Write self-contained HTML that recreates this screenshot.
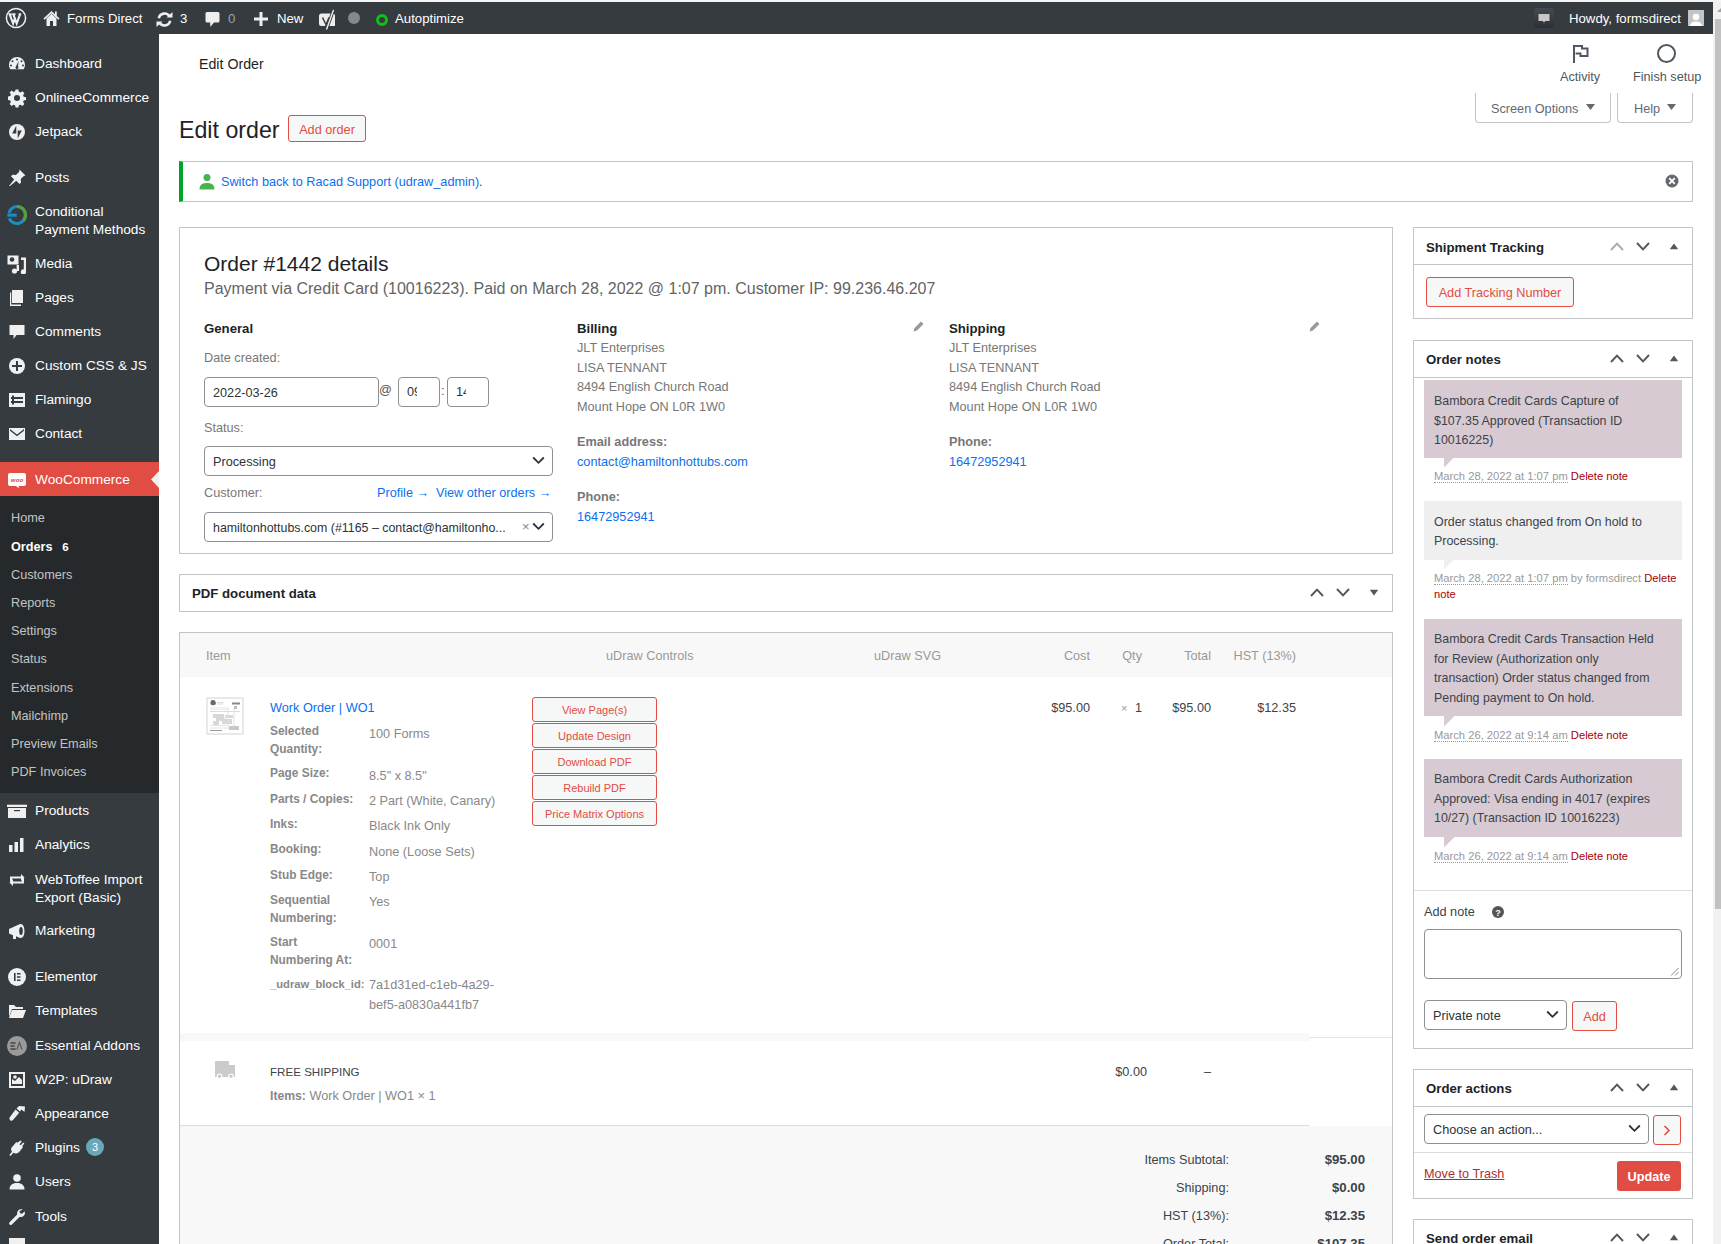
<!DOCTYPE html>
<html><head><meta charset="utf-8">
<style>
*{box-sizing:border-box}
html,body{margin:0;padding:0}
body{width:1721px;height:1244px;overflow:hidden;position:relative;background:#fff;font-family:"Liberation Sans",sans-serif;font-size:12.7px;color:#3c434a}
.a{position:absolute;white-space:nowrap}
svg{display:block}
div.a{padding-top:1px}
#topstrip{left:0;top:0;width:1721px;height:2px;background:#f4f4f4}
#adminbar{left:0;top:2px;width:1713px;height:32px;background:#363b3f;color:#fff;font-size:13.2px}
#adminbar .t{top:0;line-height:32px}
#sb{left:1713px;top:2px;width:8px;height:1242px;background:#f1f1f1}
#sbthumb{left:1715px;top:19px;width:6px;height:890px;background:#c1c1c1}
#menu{left:0;top:34px;width:159px;height:1210px;background:#363b3f}
.mi{left:35px;color:#fff;font-size:13.7px;line-height:18px}
.ic{left:7px;width:20px;height:20px}
.sub{left:11px;color:#c3c4c5;font-size:12.7px;line-height:18px}
</style></head>
<body>
<div id="topstrip" class="a"></div>
<div id="adminbar" class="a">
  <!-- WP logo -->
  <svg class="a" style="left:5px;top:5px" width="22" height="22" viewBox="0 0 22 22"><circle cx="11" cy="11" r="9.6" fill="none" stroke="#eee" stroke-width="1.5"/><path d="M4.6 7.2l3.5 9.3 2.2-6.2M8.2 7.2l3.5 9.3 3.4-9.3M3.6 7.2h3.2M7.3 7.2h3.2M13.6 7.2h2.6" fill="none" stroke="#eee" stroke-width="2.1"/></svg>
  <!-- home -->
  <svg class="a" style="left:43px;top:8px" width="17" height="17" viewBox="0 0 17 17"><path d="M3.5 8.5V16h10V8.5L8.5 3.8z" fill="#eee"/><rect x="7" y="11" width="3" height="5" fill="#363b3f"/><path d="M1 9.2L8.5 2.2 16 9.2" fill="none" stroke="#eee" stroke-width="1.7"/><rect x="12" y="1.5" width="1.8" height="5" fill="#eee"/></svg>
  <div class="a t" style="left:67px">Forms Direct</div>
  <!-- updates -->
  <svg class="a" style="left:155px;top:9px" width="19" height="17" viewBox="0 0 19 17"><path d="M3.8 7.2A5.8 5.8 0 0 1 14.6 5.6" fill="none" stroke="#eee" stroke-width="2.6"/><path d="M11.5 6.5h6V1z" fill="#eee"/><path d="M15.2 9.8A5.8 5.8 0 0 1 4.4 11.4" fill="none" stroke="#eee" stroke-width="2.6"/><path d="M7.5 10.5h-6V16z" fill="#eee"/></svg>
  <div class="a t" style="left:180px">3</div>
  <!-- comments -->
  <svg class="a" style="left:205px;top:9px" width="15" height="17" viewBox="0 0 15 17"><path d="M2 1h11a1.5 1.5 0 0 1 1.5 1.5v7.5A1.5 1.5 0 0 1 13 11.5H9L5.2 16V11.5H2A1.5 1.5 0 0 1 .5 10v-7.5A1.5 1.5 0 0 1 2 1z" fill="#eee"/></svg>
  <div class="a t" style="left:228px;color:#a0a5aa">0</div>
  <!-- new -->
  <svg class="a" style="left:254px;top:10px" width="14" height="14" viewBox="0 0 14 14"><path d="M5.5 0h3v5.5H14v3H8.5V14h-3V8.5H0v-3h5.5z" fill="#eee"/></svg>
  <div class="a t" style="left:277px">New</div>
  <!-- yoast -->
  <svg class="a" style="left:318px;top:7px" width="19" height="22" viewBox="0 0 19 22"><path d="M3.5 4.5h9.5l-4.2 12.5H3.5A2.5 2.5 0 0 1 1 14.5V7A2.5 2.5 0 0 1 3.5 4.5zM13.8 5.2l.7-.7a2.5 2.5 0 0 1 2.5 2.5v10H10z" fill="#eee"/><path d="M4.5 8.5l3.2 6.5M11 8.5L7.5 17" stroke="#363b3f" stroke-width="1.5" fill="none"/><path d="M15.5 1L8.5 20.5" stroke="#363b3f" stroke-width="3.2"/><path d="M15.5 1L8.5 20.5" stroke="#eee" stroke-width="1.4"/></svg>
  <div class="a" style="left:348px;top:10px;width:12px;height:12px;border-radius:50%;background:#888"></div>
  <div class="a" style="left:376px;top:12px;width:12px;height:12px;border-radius:50%;border:3px solid #0fbf1b"></div>
  <div class="a t" style="left:395px">Autoptimize</div>
  <!-- right -->
  <div class="a" style="left:1534px;top:6px;width:20px;height:20px;border-radius:3px;background:linear-gradient(#444a4f,#2c3034)"></div>
  <svg class="a" style="left:1538px;top:11px" width="12" height="12" viewBox="0 0 12 12"><path d="M0.5 1h11v7H7L6 10 5 8H0.5z" fill="#c8c8c8"/></svg>
  <div class="a t" style="left:1569px">Howdy, formsdirect</div>
  <div class="a" style="left:1688px;top:8px;width:16px;height:16px;background:#c4c4c4;overflow:hidden"><svg width="16" height="16" viewBox="0 0 16 16"><circle cx="8" cy="6" r="3.3" fill="#fff"/><path d="M1.5 16c.5-4 3-5.5 6.5-5.5s6 1.5 6.5 5.5z" fill="#fff"/></svg></div>
</div>
<div id="sb" class="a"></div>
<svg class="a" style="left:1713px;top:5px" width="8" height="10" viewBox="0 0 8 10"><path d="M8 3L4 7h4z" fill="#a3a3a3"/></svg>
<div id="sbthumb" class="a"></div>

<!-- MENU -->
<div id="menu" class="a"></div>
<!-- MENU_ITEMS -->
<div class="a" style="left:7px;top:53.0px"><svg width="20" height="20" viewBox="0 0 20 20"><path d="M10 3a8 8 0 0 0-8 8c0 1.6.5 3.1 1.3 4.3h13.4A8 8 0 0 0 18 11a8 8 0 0 0-8-8zm0 1.6a1 1 0 1 1 0 2 1 1 0 0 1 0-2zM5.5 6.3a1 1 0 1 1 0 2 1 1 0 0 1 0-2zm9 0a1 1 0 1 1 0 2 1 1 0 0 1 0-2zM4 10.5a1 1 0 1 1 0 2 1 1 0 0 1 0-2zm12 0a1 1 0 1 1 0 2 1 1 0 0 1 0-2zM11.6 7l-.6 5.3a1.5 1.5 0 1 1-2 0z" fill="#f0f0f1" fill-rule="evenodd"/></svg></div>
<div class="a mi" style="top:54px">Dashboard</div>
<div class="a" style="left:7px;top:87.0px"><svg width="20" height="20" viewBox="0 0 20 20"><path d="M8.6 1.5h2.8l.5 2.3 1.5.7 2-1.3 2 2-1.3 2 .6 1.5 2.3.5v2.8l-2.3.5-.6 1.5 1.3 2-2 2-2-1.3-1.5.6-.5 2.3H8.6l-.5-2.3-1.5-.6-2 1.3-2-2 1.3-2-.6-1.5-2.3-.5V8.6l2.3-.5.6-1.5-1.3-2 2-2 2 1.3 1.5-.7zM10 7a3 3 0 1 0 0 6 3 3 0 0 0 0-6z" fill="#f0f0f1" fill-rule="evenodd"/></svg></div>
<div class="a mi" style="top:88px">OnlineeCommerce</div>
<div class="a" style="left:7px;top:121.0px"><svg width="20" height="20" viewBox="0 0 20 20"><circle cx="10" cy="10" r="8" fill="#f0f0f1"/><path d="M9.3 3.5v8H5.2zM10.7 16.5v-8h4.1z" fill="#363b3f"/></svg></div>
<div class="a mi" style="top:122px">Jetpack</div>
<div class="a" style="left:7px;top:167.0px"><svg width="20" height="20" viewBox="0 0 20 20"><path d="M12.5 1.5l6 6-1.6.4-3.2 3.2.3 3.4-1.5 1.5-3.2-3.2L3 18l-1-.1 5.2-6.4L4 8.3l1.5-1.5 3.4.3 3.2-3.2z" fill="#f0f0f1"/></svg></div>
<div class="a mi" style="top:168px">Posts</div>
<div class="a" style="left:6px;top:203.0px"><svg width="22" height="22" viewBox="0 0 22 22"><path d="M11 2.5a8.5 8.5 0 1 1-7.8 11.8" fill="none" stroke="#1e8cbe" stroke-width="3.2"/><path d="M11 2.5a8.5 8.5 0 0 1 6.5 13.9" fill="none" stroke="#5a9e3a" stroke-width="3.2"/><path d="M3 11a8 8 0 0 1 8-8.5" fill="none" stroke="#1e8cbe" stroke-width="3.2"/><rect x="1" y="9.2" width="10" height="3.8" fill="#1e8cbe" stroke="#363b3f" stroke-width=".6"/></svg></div>
<div class="a mi" style="top:202px">Conditional<br>Payment Methods</div>
<div class="a" style="left:7px;top:253.0px"><svg width="20" height="20" viewBox="0 0 20 20"><path d="M0.5 1.5h11v9h-11z" fill="#f0f0f1"/><circle cx="5" cy="5.5" r="2.3" fill="#363b3f"/><path d="M14 3.5h5v14.5a2.6 2.6 0 1 1-2.2-2.6V6H14z" fill="#f0f0f1"/><circle cx="7.5" cy="17" r="2.6" fill="#f0f0f1"/><path d="M9.6 11h2.4v6H9.6z" fill="#f0f0f1"/></svg></div>
<div class="a mi" style="top:254px">Media</div>
<div class="a" style="left:7px;top:287.0px"><svg width="20" height="20" viewBox="0 0 20 20"><path d="M5 2h11v13H5z" fill="#f0f0f1"/><path d="M3 4.5h1.2V16.5H14V18H3z" fill="#f0f0f1"/></svg></div>
<div class="a mi" style="top:288px">Pages</div>
<div class="a" style="left:7px;top:321.0px"><svg width="20" height="20" viewBox="0 0 20 20"><path d="M2.5 3h15v10H9.5L6.5 17v-4h-4z" fill="#f0f0f1"/></svg></div>
<div class="a mi" style="top:322px">Comments</div>
<div class="a" style="left:7px;top:355.0px"><svg width="20" height="20" viewBox="0 0 20 20"><circle cx="10" cy="10" r="8" fill="#f0f0f1"/><path d="M9 5h2v4h4v2h-4v4H9v-4H5V9h4z" fill="#363b3f"/></svg></div>
<div class="a mi" style="top:356px">Custom CSS &amp; JS</div>
<div class="a" style="left:7px;top:389.0px"><svg width="20" height="20" viewBox="0 0 20 20"><path d="M2 3h16v14H2z" fill="#f0f0f1"/><path d="M4 7h12v2H4zM4 11h12v2H4z" fill="#363b3f"/><path d="M5 5.5h2v9H5z" fill="#363b3f"/></svg></div>
<div class="a mi" style="top:390px">Flamingo</div>
<div class="a" style="left:7px;top:423.0px"><svg width="20" height="20" viewBox="0 0 20 20"><path d="M2 4h16v12H2z" fill="#f0f0f1"/><path d="M3 5l7 5.5L17 5v1.8l-7 5.4-7-5.4z" fill="#363b3f"/></svg></div>
<div class="a mi" style="top:424px">Contact</div>
<div class="a" style="left:7px;top:800.0px"><svg width="20" height="20" viewBox="0 0 20 20"><path d="M0 3.7h20v2.3H0z" fill="#f0f0f1"/><path d="M1 7h18v10H1z" fill="#f0f0f1"/><path d="M7 9h6v1.2H7z" fill="#363b3f"/></svg></div>
<div class="a mi" style="top:801px">Products</div>
<div class="a" style="left:7px;top:834.0px"><svg width="20" height="20" viewBox="0 0 20 20"><path d="M2 10h3.5v7H2zM7.5 7h3.5v10H7.5zM13 3h3.5v14H13z" fill="#f0f0f1"/></svg></div>
<div class="a mi" style="top:835px">Analytics</div>
<div class="a" style="left:7px;top:869.0px"><svg width="20" height="20" viewBox="0 0 20 20"><path d="M3 6.5h11V4l3.5 3.5L14 11V8.5H5v3H3zM17 13.5H6V16l-3.5-3.5L6 9v2.5h9v-3h2z" fill="#f0f0f1"/></svg></div>
<div class="a mi" style="top:870px">WebToffee Import<br>Export (Basic)</div>
<div class="a" style="left:7px;top:920.0px"><svg width="20" height="20" viewBox="0 0 20 20"><path d="M2 8l11-5v14l-4-1.8V18H6v-3.8l-4-1.7z" fill="#f0f0f1"/><ellipse cx="14" cy="10" rx="3.5" ry="7" fill="#f0f0f1"/><ellipse cx="14" cy="10" rx="1.8" ry="4" fill="#363b3f"/></svg></div>
<div class="a mi" style="top:921px">Marketing</div>
<div class="a" style="left:7px;top:966.0px"><svg width="20" height="20" viewBox="0 0 20 20"><circle cx="10" cy="10" r="9" fill="#f0f0f1"/><path d="M7 6h1.6v8H7zM10 6h3.5v1.6H10zM10 9.2h3.5v1.6H10zM10 12.4h3.5V14H10z" fill="#363b3f"/></svg></div>
<div class="a mi" style="top:967px">Elementor</div>
<div class="a" style="left:7px;top:1000.0px"><svg width="20" height="20" viewBox="0 0 20 20"><path d="M2 4h5l2 2h7v2H5l-3 8z" fill="#f0f0f1"/><path d="M5 9h14l-3 8H2z" fill="#f0f0f1"/></svg></div>
<div class="a mi" style="top:1001px">Templates</div>
<div class="a" style="left:6px;top:1033.5px"><svg width="22" height="22" viewBox="0 0 22 22"><circle cx="11" cy="11" r="10" fill="#9a9a9a"/><path d="M5 7.5h4v1H5zM5 10.5h3v1H5zM5 13.5h4v1H5zM11 14.5l2.5-7 2.5 7" stroke="#5a5a5a" stroke-width="1.2" fill="none"/></svg></div>
<div class="a mi" style="top:1035.5px">Essential Addons</div>
<div class="a" style="left:7px;top:1069.0px"><svg width="20" height="20" viewBox="0 0 20 20"><path d="M2 2h16v16H2z" fill="#f0f0f1"/><path d="M4 4h12v12H4z" fill="#363b3f"/><path d="M5 14V9l3 2 4-4 3 3v4z" fill="#f0f0f1"/><circle cx="8" cy="7" r="1.8" fill="#f0f0f1"/></svg></div>
<div class="a mi" style="top:1070px">W2P: uDraw</div>
<div class="a" style="left:7px;top:1103.0px"><svg width="20" height="20" viewBox="0 0 20 20"><path d="M12 2l6 .5-.5 5.5-3-2.5-1.5 2-3.5-3zM8.5 5.5l3.7 3.2L6 16a2 2 0 0 1-3-.1 2 2 0 0 1 0-2.9z" fill="#f0f0f1"/></svg></div>
<div class="a mi" style="top:1104px">Appearance</div>
<div class="a" style="left:7px;top:1137.0px"><svg width="20" height="20" viewBox="0 0 20 20"><path d="M13.5 2.5l1.3 1-2.3 2.8 1.3 1 2.3-2.8 1.3 1-2.3 2.8 1 .8-3.7 4.6C10.6 15.7 8 16 6.3 14.7L3.6 18l-1.3-1 2.7-3.3c-1.3-1.7-1.2-4.3.6-5.3L9.3 4l1 .8z" fill="#f0f0f1"/></svg></div>
<div class="a mi" style="top:1138px">Plugins</div>
<div class="a" style="left:7px;top:1171.0px"><svg width="20" height="20" viewBox="0 0 20 20"><circle cx="10" cy="6" r="3.8" fill="#f0f0f1"/><path d="M2.5 17.5c0-4 2.5-6.5 7.5-6.5s7.5 2.5 7.5 6.5z" fill="#f0f0f1"/></svg></div>
<div class="a mi" style="top:1172px">Users</div>
<div class="a" style="left:7px;top:1206.0px"><svg width="20" height="20" viewBox="0 0 20 20"><path d="M15.8 2.5a4.2 4.2 0 0 0-5.6 5.1L2.6 15.2a1.6 1.6 0 0 0 2.3 2.3l7.6-7.6a4.2 4.2 0 0 0 5.1-5.6l-2.5 2.5-2.1-.5-.5-2.1z" fill="#f0f0f1"/></svg></div>
<div class="a mi" style="top:1207px">Tools</div>
<div class="a" style="left:9px;top:1238px;width:16px;height:8px;background:#f0f0f1"></div>
<div class="a" style="left:86px;top:1138px;width:18px;height:18px;border-radius:9px;background:#69a8bb;color:#fff;font-size:11px;line-height:17px;text-align:center">3</div>
<div class="a" style="left:0;top:462px;width:159px;height:34px;background:#e14d43"></div>
<div class="a" style="left:7px;top:469px"><svg width="20" height="20" viewBox="0 0 20 20"><path d="M3 3h14a2 2 0 0 1 2 2v9a2 2 0 0 1-2 2h-5.5l.5 2.5L9 16H3a2 2 0 0 1-2-2V5a2 2 0 0 1 2-2z" fill="#fff"/><text x="10" y="12.3" font-size="6.2" font-family="Liberation Sans" font-style="italic" font-weight="bold" fill="#e14d43" text-anchor="middle">woo</text></svg></div>
<div class="a mi" style="top:470px">WooCommerce</div>
<svg class="a" style="left:151px;top:471px" width="8" height="17" viewBox="0 0 8 17"><path d="M8 0L0 8.5 8 17z" fill="#f1f1f1"/></svg>
<div class="a" style="left:0;top:496px;width:159px;height:297px;background:#26292c"></div>
<div class="a sub" style="top:508px">Home</div>
<div class="a sub" style="top:537px;color:#fff;font-weight:bold">Orders <span style="margin-left:6px;font-size:11.5px">6</span></div>
<div class="a sub" style="top:565px">Customers</div>
<div class="a sub" style="top:593px">Reports</div>
<div class="a sub" style="top:621px">Settings</div>
<div class="a sub" style="top:649px">Status</div>
<div class="a sub" style="top:678px">Extensions</div>
<div class="a sub" style="top:706px">Mailchimp</div>
<div class="a sub" style="top:734px">Preview Emails</div>
<div class="a sub" style="top:762px">PDF Invoices</div>
<!-- CONTENT -->
<!-- WC header -->
<div class="a" style="left:199px;top:54px;font-size:14.2px;line-height:18px;color:#1e1e1e">Edit Order</div>
<svg class="a" style="left:1572px;top:44px" width="18" height="20" viewBox="0 0 18 20"><path d="M2 19V2h8v2.5h5.5v7.5H8.5V9.5H3.6" fill="none" stroke="#50575e" stroke-width="2"/></svg>
<div class="a" style="left:1657px;top:44px;width:19px;height:19px;border-radius:50%;border:2px solid #50575e"></div>
<div class="a" style="left:1560px;top:68px;font-size:12.7px;line-height:16px;color:#50575e">Activity</div>
<div class="a" style="left:1633px;top:68px;font-size:12.7px;line-height:16px;color:#50575e">Finish setup</div>
<!-- screen options -->
<div class="a" style="left:1475px;top:93px;width:136px;height:30px;border:1px solid #c3c4c7;border-top:0;border-radius:0 0 4px 4px"></div>
<div class="a" style="left:1491px;top:99px;font-size:12.7px;line-height:18px;color:#646970">Screen Options</div>
<svg class="a" style="left:1586px;top:104px" width="9" height="6" viewBox="0 0 9 6"><path d="M0 0h9L4.5 6z" fill="#646970"/></svg>
<div class="a" style="left:1617px;top:93px;width:76px;height:30px;border:1px solid #c3c4c7;border-top:0;border-radius:0 0 4px 4px"></div>
<div class="a" style="left:1634px;top:99px;font-size:12.7px;line-height:18px;color:#646970">Help</div>
<svg class="a" style="left:1667px;top:104px" width="9" height="6" viewBox="0 0 9 6"><path d="M0 0h9L4.5 6z" fill="#646970"/></svg>
<!-- h1 -->
<div class="a" style="left:179px;top:115px;font-size:23.2px;line-height:28px;color:#1d2327">Edit order</div>
<div class="a" style="left:288px;top:115px;width:78px;height:27px;border:1px solid #e14d43;border-radius:3px;background:#f6f7f7;color:#e14d43;font-size:12.7px;line-height:26px;text-align:center">Add order</div>
<!-- notice -->
<div class="a" style="left:179px;top:161px;width:1514px;height:41px;border:1px solid #c3c4c7;border-left:4px solid #00a32a;background:#fff"></div>
<svg class="a" style="left:199px;top:173px" width="16" height="17" viewBox="0 0 16 17"><circle cx="8" cy="4.5" r="3.5" fill="#46b450"/><path d="M0.5 16.5c0-4.5 2.5-6.5 7.5-6.5s7.5 2 7.5 6.5z" fill="#46b450"/></svg>
<div class="a" style="left:221px;top:172px;font-size:12.7px;line-height:18px;color:#2271b1"><span style="color:#0a6ff0">Switch back to Racad Support (udraw_admin)</span><span style="color:#3c434a">.</span></div>
<svg class="a" style="left:1665px;top:174px" width="14" height="14" viewBox="0 0 14 14"><circle cx="7" cy="7" r="6.5" fill="#646970"/><path d="M4.2 4.2l5.6 5.6M9.8 4.2l-5.6 5.6" stroke="#fff" stroke-width="1.8"/></svg>

<!-- ORDER DATA BOX -->
<div class="a" style="left:179px;top:227px;width:1214px;height:327px;border:1px solid #c3c4c7"></div>
<div class="a" style="left:204px;top:250px;font-size:21px;line-height:25px;color:#1d2327">Order #1442 details</div>
<div class="a" style="left:204px;top:278px;font-size:16px;line-height:20px;color:#646464">Payment via Credit Card (10016223). Paid on March 28, 2022 @ 1:07 pm. Customer IP: 99.236.46.207</div>

<div class="a" style="left:204px;top:318.5px;font-size:13.2px;line-height:18px;color:#1d2327;font-weight:bold">General</div>
<div class="a" style="left:204px;top:348px;line-height:18px;color:#777">Date created:</div>
<div class="a" style="left:204px;top:377px;width:175px;height:30px;border:1px solid #8c8f94;border-radius:4px"></div>
<div class="a" style="left:213px;top:383px;line-height:18px;color:#2c3338">2022-03-26</div>
<div class="a" style="left:379px;top:380px;line-height:18px;color:#555">@</div>
<div class="a" style="left:398px;top:377px;width:42px;height:30px;border:1px solid #8c8f94;border-radius:4px;overflow:hidden"><div style="position:absolute;left:8px;top:5px;width:10px;overflow:hidden;line-height:18px;color:#2c3338">09</div></div>
<div class="a" style="left:441px;top:381px;line-height:18px;color:#555">:</div>
<div class="a" style="left:447px;top:377px;width:42px;height:30px;border:1px solid #8c8f94;border-radius:4px;overflow:hidden"><div style="position:absolute;left:8px;top:5px;width:10px;overflow:hidden;line-height:18px;color:#2c3338">14</div></div>
<div class="a" style="left:204px;top:418px;line-height:18px;color:#777">Status:</div>
<div class="a" style="left:204px;top:446px;width:349px;height:30px;border:1px solid #8c8f94;border-radius:4px"></div>
<div class="a" style="left:213px;top:452px;line-height:18px;color:#2c3338">Processing</div>
<svg class="a" style="left:532px;top:456px" width="13" height="9" viewBox="0 0 13 9"><path d="M1.2 1.5l5.3 5.3 5.3-5.3" fill="none" stroke="#2c3338" stroke-width="1.8"/></svg>
<div class="a" style="left:204px;top:483px;line-height:18px;color:#777">Customer:</div>
<div class="a" style="left:377px;top:483px;line-height:18px;color:#0a6ff0">Profile →</div>
<div class="a" style="left:436px;top:483px;line-height:18px;color:#0a6ff0">View other orders →</div>
<div class="a" style="left:204px;top:512px;width:349px;height:30px;border:1px solid #8c8f94;border-radius:4px"></div>
<div class="a" style="left:213px;top:518px;line-height:18px;color:#2c3338;font-size:12.4px">hamiltonhottubs.com (#1165 – contact@hamiltonho...</div>
<div class="a" style="left:522px;top:517px;line-height:18px;color:#888;font-size:13px">×</div>
<svg class="a" style="left:532px;top:522px" width="13" height="9" viewBox="0 0 13 9"><path d="M1.2 1.5l5.3 5.3 5.3-5.3" fill="none" stroke="#2c3338" stroke-width="1.8"/></svg>

<!-- billing -->
<div class="a" style="left:577px;top:318.5px;font-size:13.2px;line-height:18px;color:#1d2327;font-weight:bold">Billing</div>
<svg class="a" style="left:913px;top:321px" width="11" height="11" viewBox="0 0 11 11"><path d="M8 0.5l2.5 2.5-6.5 6.5L0.5 10.5 1.5 7z" fill="#999"/></svg>
<div class="a" style="left:577px;top:338px;line-height:19.7px;color:#777">JLT Enterprises<br>LISA TENNANT<br>8494 English Church Road<br>Mount Hope ON L0R 1W0</div>
<div class="a" style="left:577px;top:432px;line-height:18px;color:#777;font-weight:bold">Email address:</div>
<div class="a" style="left:577px;top:452px;line-height:18px;color:#0a6ff0">contact@hamiltonhottubs.com</div>
<div class="a" style="left:577px;top:487px;line-height:18px;color:#777;font-weight:bold">Phone:</div>
<div class="a" style="left:577px;top:507px;line-height:18px;color:#0a6ff0">16472952941</div>
<!-- shipping -->
<div class="a" style="left:949px;top:318.5px;font-size:13.2px;line-height:18px;color:#1d2327;font-weight:bold">Shipping</div>
<svg class="a" style="left:1309px;top:321px" width="11" height="11" viewBox="0 0 11 11"><path d="M8 0.5l2.5 2.5-6.5 6.5L0.5 10.5 1.5 7z" fill="#999"/></svg>
<div class="a" style="left:949px;top:338px;line-height:19.7px;color:#777">JLT Enterprises<br>LISA TENNANT<br>8494 English Church Road<br>Mount Hope ON L0R 1W0</div>
<div class="a" style="left:949px;top:432px;line-height:18px;color:#777;font-weight:bold">Phone:</div>
<div class="a" style="left:949px;top:452px;line-height:18px;color:#0a6ff0">16472952941</div>

<!-- CONTENT2 -->
<div class="a" style="left:179px;top:574px;width:1214px;height:38px;border:1px solid #c3c4c7"></div>
<div class="a" style="left:192px;top:584px;font-size:13.2px;line-height:18px;color:#1d2327;font-weight:bold">PDF document data</div>
<svg class="a" style="left:1310px;top:588px" width="14" height="9" viewBox="0 0 14 9"><path d="M1 8l6-6.3L13 8" fill="none" stroke="#50575e" stroke-width="1.9"/></svg>
<svg class="a" style="left:1336px;top:588px" width="14" height="9" viewBox="0 0 14 9"><path d="M1 1l6 6.3L13 1" fill="none" stroke="#50575e" stroke-width="1.9"/></svg>
<svg class="a" style="left:1369px;top:589px" width="10" height="7" viewBox="0 0 10 7"><path d="M0.8 0.8h8.4L5 6.5z" fill="#50575e"/></svg>
<div class="a" style="left:179px;top:632px;width:1214px;height:640px;border:1px solid #c3c4c7;background:#fff"></div>
<div class="a" style="left:180px;top:633px;width:1212px;height:44px;background:#f8f8f8"></div>
<div class="a" style="left:206px;top:646px;line-height:18px;color:#999">Item</div>
<div class="a" style="right:1027.5px;top:646px;line-height:18px;color:#999">uDraw Controls</div>
<div class="a" style="right:780px;top:646px;line-height:18px;color:#999">uDraw SVG</div>
<div class="a" style="right:631px;top:646px;line-height:18px;color:#999">Cost</div>
<div class="a" style="right:579px;top:646px;line-height:18px;color:#999">Qty</div>
<div class="a" style="right:510px;top:646px;line-height:18px;color:#999">Total</div>
<div class="a" style="right:425px;top:646px;line-height:18px;color:#999">HST (13%)</div>
<div class="a" style="left:206px;top:697px;width:38px;height:38px;background:#e8e8e8;padding:2px"><svg width="34" height="34" viewBox="0 0 34 34"><rect x="0" y="0" width="34" height="34" fill="#fff"/><path d="M2.5 3a2.5 2 0 1 1 5 0 2.5 2 0 0 1-5 2z" fill="#666"/><path d="M9 3h7v1H9zM9 4.5h6v1H9z" fill="#ddd"/><path d="M24 3.5h8v2h-8z" fill="#888"/><path d="M26 7h3v3h-3z" fill="#bbb"/><path d="M2 8h19v3H2z" fill="#f0f0f0"/><path d="M2 12h30v1H2z" fill="#ddd"/><path d="M5 15h11v4H5zM8 19h9v3H8zM5 22h6v4H5zM17 16h8v3h-8zM14 20h10v5H14z" fill="#d8d8d8"/><path d="M20 10v20M26 10v20" stroke="#e0e0e0" stroke-width="1"/><path d="M2 26h17v1H2zM2 28.5h17v1H2z" fill="#e4e4e4"/><path d="M21 27h10v4H21z" fill="#c8c8c8"/><path d="M2 31h12v1H2z" fill="#999"/></svg></div>
<div class="a" style="left:270px;top:698px;font-size:12.7px;line-height:18px;color:#0a6ff0">Work Order | WO1</div>
<div class="a" style="right:631px;top:698px;line-height:18px;color:#3c434a">$95.00</div>
<div class="a" style="right:510px;top:698px;line-height:18px;color:#3c434a">$95.00</div>
<div class="a" style="right:425px;top:698px;line-height:18px;color:#3c434a">$12.35</div>
<div class="a" style="left:1121px;top:698px;line-height:18px;color:#999;font-size:11px">×</div>
<div class="a" style="right:579px;top:698px;line-height:18px;color:#3c434a">1</div>
<div class="a" style="left:270px;top:722.0px;line-height:17.8px;color:#888;font-weight:bold;font-size:11.9px">Selected<br>Quantity:</div>
<div class="a" style="left:369px;top:723.6px;line-height:18px;color:#888">100 Forms</div>
<div class="a" style="left:270px;top:764.0px;line-height:17.8px;color:#888;font-weight:bold;font-size:11.9px">Page Size:</div>
<div class="a" style="left:369px;top:765.5px;line-height:18px;color:#888">8.5" x 8.5"</div>
<div class="a" style="left:270px;top:789.6px;line-height:17.8px;color:#888;font-weight:bold;font-size:11.9px">Parts / Copies:</div>
<div class="a" style="left:369px;top:791.3px;line-height:18px;color:#888">2 Part (White, Canary)</div>
<div class="a" style="left:270px;top:814.6px;line-height:17.8px;color:#888;font-weight:bold;font-size:11.9px">Inks:</div>
<div class="a" style="left:369px;top:816.3px;line-height:18px;color:#888">Black Ink Only</div>
<div class="a" style="left:270px;top:840.2px;line-height:17.8px;color:#888;font-weight:bold;font-size:11.9px">Booking:</div>
<div class="a" style="left:369px;top:841.5px;line-height:18px;color:#888">None (Loose Sets)</div>
<div class="a" style="left:270px;top:865.7px;line-height:17.8px;color:#888;font-weight:bold;font-size:11.9px">Stub Edge:</div>
<div class="a" style="left:369px;top:867.4px;line-height:18px;color:#888">Top</div>
<div class="a" style="left:270px;top:890.9px;line-height:17.8px;color:#888;font-weight:bold;font-size:11.9px">Sequential<br>Numbering:</div>
<div class="a" style="left:369px;top:892.3px;line-height:18px;color:#888">Yes</div>
<div class="a" style="left:270px;top:932.8px;line-height:17.8px;color:#888;font-weight:bold;font-size:11.9px">Start<br>Numbering At:</div>
<div class="a" style="left:369px;top:934.4px;line-height:18px;color:#888">0001</div>
<div class="a" style="left:270px;top:975.0px;line-height:17.8px;color:#888;font-weight:bold;font-size:11.2px">_udraw_block_id:</div>
<div class="a" style="left:369px;top:975.4px;line-height:19.7px;color:#888">7a1d31ed-c1eb-4a29-<br>bef5-a0830a441fb7</div>
<div class="a" style="left:532px;top:697px;width:125px;height:25px;border:1px solid #e14d43;border-radius:3px;background:#f6f7f7;color:#e14d43;font-size:11px;line-height:23px;text-align:center">View Page(s)</div>
<div class="a" style="left:532px;top:723px;width:125px;height:25px;border:1px solid #e14d43;border-radius:3px;background:#f6f7f7;color:#e14d43;font-size:11px;line-height:23px;text-align:center">Update Design</div>
<div class="a" style="left:532px;top:749px;width:125px;height:25px;border:1px solid #e14d43;border-radius:3px;background:#f6f7f7;color:#e14d43;font-size:11px;line-height:23px;text-align:center">Download PDF</div>
<div class="a" style="left:532px;top:775px;width:125px;height:25px;border:1px solid #e14d43;border-radius:3px;background:#f6f7f7;color:#e14d43;font-size:11px;line-height:23px;text-align:center">Rebuild PDF</div>
<div class="a" style="left:532px;top:801px;width:125px;height:25px;border:1px solid #e14d43;border-radius:3px;background:#f6f7f7;color:#e14d43;font-size:11px;line-height:23px;text-align:center">Price Matrix Options</div>
<div class="a" style="left:180px;top:1033px;width:1129px;height:8px;background:#f8f8f8"></div>
<div class="a" style="left:1309px;top:1037px;width:83px;height:1px;background:#e5e5e5"></div>
<svg class="a" style="left:214px;top:1060px" width="22" height="19" viewBox="0 0 22 19"><path d="M1.5 1h13.5v4h6v11.5a.5.5 0 0 1-.5.5H1.5a.5.5 0 0 1-.5-.5V1.5a.5.5 0 0 1 .5-.5z" fill="#cbcbcb"/><circle cx="5.6" cy="16.3" r="2.3" fill="#cbcbcb" stroke="#fff" stroke-width="1.1"/><circle cx="16.9" cy="16.3" r="2.3" fill="#cbcbcb" stroke="#fff" stroke-width="1.1"/></svg>
<div class="a" style="left:270px;top:1062px;line-height:18px;color:#3c434a;font-size:11.6px">FREE SHIPPING</div>
<div class="a" style="left:270px;top:1086px;line-height:18px;color:#888"><b style="font-size:12.2px">Items:</b> Work Order | WO1 × 1</div>
<div class="a" style="right:574px;top:1062px;line-height:18px;color:#3c434a">$0.00</div>
<div class="a" style="left:1204px;top:1062px;line-height:18px;color:#3c434a">–</div>
<div class="a" style="left:180px;top:1125px;width:1129px;height:1px;background:#dcdcde"></div>
<div class="a" style="left:180px;top:1126px;width:1212px;height:130px;background:#f8f8f8"></div>
<div class="a" style="right:492px;top:1150px;line-height:18px;color:#3c434a">Items Subtotal:</div>
<div class="a" style="right:356px;top:1150px;line-height:18px;color:#3c434a;font-weight:bold;font-size:13.2px">$95.00</div>
<div class="a" style="right:492px;top:1178px;line-height:18px;color:#3c434a">Shipping:</div>
<div class="a" style="right:356px;top:1178px;line-height:18px;color:#3c434a;font-weight:bold;font-size:13.2px">$0.00</div>
<div class="a" style="right:492px;top:1206px;line-height:18px;color:#3c434a">HST (13%):</div>
<div class="a" style="right:356px;top:1206px;line-height:18px;color:#3c434a;font-weight:bold;font-size:13.2px">$12.35</div>
<div class="a" style="right:492px;top:1234px;line-height:18px;color:#3c434a">Order Total:</div>
<div class="a" style="right:356px;top:1234px;line-height:18px;color:#3c434a;font-weight:bold;font-size:13.2px">$107.35</div>
<!-- CONTENT3 -->
<div class="a" style="left:1413px;top:227px;width:280px;height:92px;border:1px solid #c3c4c7;background:#fff"></div>
<div class="a" style="left:1414px;top:264px;width:278px;height:1px;background:#c3c4c7"></div>
<div class="a" style="left:1426px;top:237.5px;font-size:13.2px;line-height:18px;color:#1d2327;font-weight:bold">Shipment Tracking</div>
<svg class="a" style="left:1610px;top:241.5px" width="14" height="9" viewBox="0 0 14 9"><path d="M1 8l6-6.3L13 8" fill="none" stroke="#a7aaad" stroke-width="1.9"/></svg>
<svg class="a" style="left:1636px;top:241.5px" width="14" height="9" viewBox="0 0 14 9"><path d="M1 1l6 6.3L13 1" fill="none" stroke="#50575e" stroke-width="1.9"/></svg>
<svg class="a" style="left:1669px;top:242.5px" width="10" height="7" viewBox="0 0 10 7"><path d="M0.8 6.2h8.4L5 0.5z" fill="#50575e"/></svg>
<div class="a" style="left:1426px;top:277px;width:148px;height:30px;border:1px solid #e14d43;border-radius:3px;background:#f6f7f7;color:#e14d43;font-size:12.7px;line-height:28px;text-align:center">Add Tracking Number</div>
<div class="a" style="left:1413px;top:340px;width:280px;height:709px;border:1px solid #c3c4c7;background:#fff"></div>
<div class="a" style="left:1414px;top:377px;width:278px;height:1px;background:#c3c4c7"></div>
<div class="a" style="left:1426px;top:350px;font-size:13.2px;line-height:18px;color:#1d2327;font-weight:bold">Order notes</div>
<svg class="a" style="left:1610px;top:354px" width="14" height="9" viewBox="0 0 14 9"><path d="M1 8l6-6.3L13 8" fill="none" stroke="#50575e" stroke-width="1.9"/></svg>
<svg class="a" style="left:1636px;top:354px" width="14" height="9" viewBox="0 0 14 9"><path d="M1 1l6 6.3L13 1" fill="none" stroke="#50575e" stroke-width="1.9"/></svg>
<svg class="a" style="left:1669px;top:355px" width="10" height="7" viewBox="0 0 10 7"><path d="M0.8 6.2h8.4L5 0.5z" fill="#50575e"/></svg>
<div class="a" style="left:1424px;top:380px;width:258px;height:77.5px;background:#d7cad2"></div>
<svg class="a" style="left:1444px;top:457.0px" width="11" height="11" viewBox="0 0 11 11"><path d="M0 0h10.5L0 10.5z" fill="#d7cad2"/></svg>
<div class="a" style="left:1434px;top:391.0px;line-height:19.5px;color:#3c434a;font-size:12.4px">Bambora Credit Cards Capture of<br>$107.35 Approved (Transaction ID<br>10016225)</div>
<div class="a" style="left:1434px;top:467.0px;line-height:16px;color:#999;font-size:11.2px"><span style="border-bottom:1px dotted #999">March 28, 2022 at 1:07 pm</span> <span style="color:#a00">Delete note</span></div>
<div class="a" style="left:1424px;top:501px;width:258px;height:58.6px;background:#efefef"></div>
<svg class="a" style="left:1444px;top:559.1px" width="11" height="11" viewBox="0 0 11 11"><path d="M0 0h10.5L0 10.5z" fill="#efefef"/></svg>
<div class="a" style="left:1434px;top:511.5px;line-height:19.5px;color:#3c434a;font-size:12.4px">Order status changed from On hold to<br>Processing.</div>
<div class="a" style="left:1434px;top:569.4px;line-height:16px;color:#999;font-size:11.2px"><span style="border-bottom:1px dotted #999">March 28, 2022 at 1:07 pm</span> by formsdirect <span style="color:#a00">Delete</span><br><span style="color:#a00">note</span></div>
<div class="a" style="left:1424px;top:619px;width:258px;height:97.3px;background:#d7cad2"></div>
<svg class="a" style="left:1444px;top:715.8px" width="11" height="11" viewBox="0 0 11 11"><path d="M0 0h10.5L0 10.5z" fill="#d7cad2"/></svg>
<div class="a" style="left:1434px;top:629.2px;line-height:19.5px;color:#3c434a;font-size:12.4px">Bambora Credit Cards Transaction Held<br>for Review (Authorization only<br>transaction) Order status changed from<br>Pending payment to On hold.</div>
<div class="a" style="left:1434px;top:726.0px;line-height:16px;color:#999;font-size:11.2px"><span style="border-bottom:1px dotted #999">March 26, 2022 at 9:14 am</span> <span style="color:#a00">Delete note</span></div>
<div class="a" style="left:1424px;top:759px;width:258px;height:78.3px;background:#d7cad2"></div>
<svg class="a" style="left:1444px;top:836.8px" width="11" height="11" viewBox="0 0 11 11"><path d="M0 0h10.5L0 10.5z" fill="#d7cad2"/></svg>
<div class="a" style="left:1434px;top:769.2px;line-height:19.5px;color:#3c434a;font-size:12.4px">Bambora Credit Cards Authorization<br>Approved: Visa ending in 4017 (expires<br>10/27) (Transaction ID 10016223)</div>
<div class="a" style="left:1434px;top:847.0px;line-height:16px;color:#999;font-size:11.2px"><span style="border-bottom:1px dotted #999">March 26, 2022 at 9:14 am</span> <span style="color:#a00">Delete note</span></div>
<div class="a" style="left:1414px;top:890px;width:278px;height:1px;background:#dcdcde"></div>
<div class="a" style="left:1424px;top:902px;line-height:18px;color:#3c434a">Add note</div>
<div class="a" style="left:1492px;top:906px;width:12px;height:12px;border-radius:50%;background:#555;color:#fff;font-size:9px;line-height:12px;text-align:center;font-weight:bold">?</div>
<div class="a" style="left:1424px;top:929px;width:258px;height:50px;border:1px solid #8c8f94;border-radius:4px"></div>
<svg class="a" style="left:1670px;top:967px" width="9" height="9" viewBox="0 0 9 9"><path d="M8.5 1L1 8.5M8.5 5L5 8.5" stroke="#888" stroke-width="1"/></svg>
<div class="a" style="left:1424px;top:1000px;width:143px;height:30px;border:1px solid #8c8f94;border-radius:4px"></div>
<div class="a" style="left:1433px;top:1006px;line-height:18px;color:#2c3338">Private note</div>
<svg class="a" style="left:1546px;top:1010px" width="13" height="9" viewBox="0 0 13 9"><path d="M1.2 1.5l5.3 5.3 5.3-5.3" fill="none" stroke="#2c3338" stroke-width="1.8"/></svg>
<div class="a" style="left:1572px;top:1001px;width:45px;height:30px;border:1px solid #e14d43;border-radius:3px;background:#f6f7f7;color:#e14d43;font-size:12.7px;line-height:28px;text-align:center">Add</div>
<div class="a" style="left:1413px;top:1069px;width:280px;height:130px;border:1px solid #c3c4c7;background:#fff"></div>
<div class="a" style="left:1414px;top:1106px;width:278px;height:1px;background:#c3c4c7"></div>
<div class="a" style="left:1426px;top:1079px;font-size:13.2px;line-height:18px;color:#1d2327;font-weight:bold">Order actions</div>
<svg class="a" style="left:1610px;top:1083px" width="14" height="9" viewBox="0 0 14 9"><path d="M1 8l6-6.3L13 8" fill="none" stroke="#50575e" stroke-width="1.9"/></svg>
<svg class="a" style="left:1636px;top:1083px" width="14" height="9" viewBox="0 0 14 9"><path d="M1 1l6 6.3L13 1" fill="none" stroke="#50575e" stroke-width="1.9"/></svg>
<svg class="a" style="left:1669px;top:1084px" width="10" height="7" viewBox="0 0 10 7"><path d="M0.8 6.2h8.4L5 0.5z" fill="#50575e"/></svg>
<div class="a" style="left:1424px;top:1114px;width:225px;height:30px;border:1px solid #8c8f94;border-radius:4px"></div>
<div class="a" style="left:1433px;top:1120px;line-height:18px;color:#2c3338">Choose an action...</div>
<svg class="a" style="left:1628px;top:1124px" width="13" height="9" viewBox="0 0 13 9"><path d="M1.2 1.5l5.3 5.3 5.3-5.3" fill="none" stroke="#2c3338" stroke-width="1.8"/></svg>
<div class="a" style="left:1653px;top:1115px;width:28px;height:30px;border:1px solid #e14d43;border-radius:3px;background:#f6f7f7"></div>
<svg class="a" style="left:1663px;top:1125px" width="8" height="11" viewBox="0 0 8 11"><path d="M1.5 1l4.5 4.5L1.5 10" fill="none" stroke="#e14d43" stroke-width="1.6"/></svg>
<div class="a" style="left:1414px;top:1152px;width:278px;height:1px;background:#dcdcde"></div>
<div class="a" style="left:1424px;top:1164px;line-height:18px;color:#b32d2e;text-decoration:underline">Move to Trash</div>
<div class="a" style="left:1617px;top:1161px;width:64px;height:30px;border-radius:3px;background:#e14d43;color:#fff;font-size:12.7px;line-height:30px;text-align:center;font-weight:bold">Update</div>
<div class="a" style="left:1413px;top:1219px;width:280px;height:100px;border:1px solid #c3c4c7;background:#fff"></div>
<div class="a" style="left:1426px;top:1229px;font-size:13.2px;line-height:18px;color:#1d2327;font-weight:bold">Send order email</div>
<svg class="a" style="left:1610px;top:1233px" width="14" height="9" viewBox="0 0 14 9"><path d="M1 8l6-6.3L13 8" fill="none" stroke="#50575e" stroke-width="1.9"/></svg>
<svg class="a" style="left:1636px;top:1233px" width="14" height="9" viewBox="0 0 14 9"><path d="M1 1l6 6.3L13 1" fill="none" stroke="#50575e" stroke-width="1.9"/></svg>
<svg class="a" style="left:1669px;top:1234px" width="10" height="7" viewBox="0 0 10 7"><path d="M0.8 6.2h8.4L5 0.5z" fill="#50575e"/></svg>
<!-- END -->
</body></html>
